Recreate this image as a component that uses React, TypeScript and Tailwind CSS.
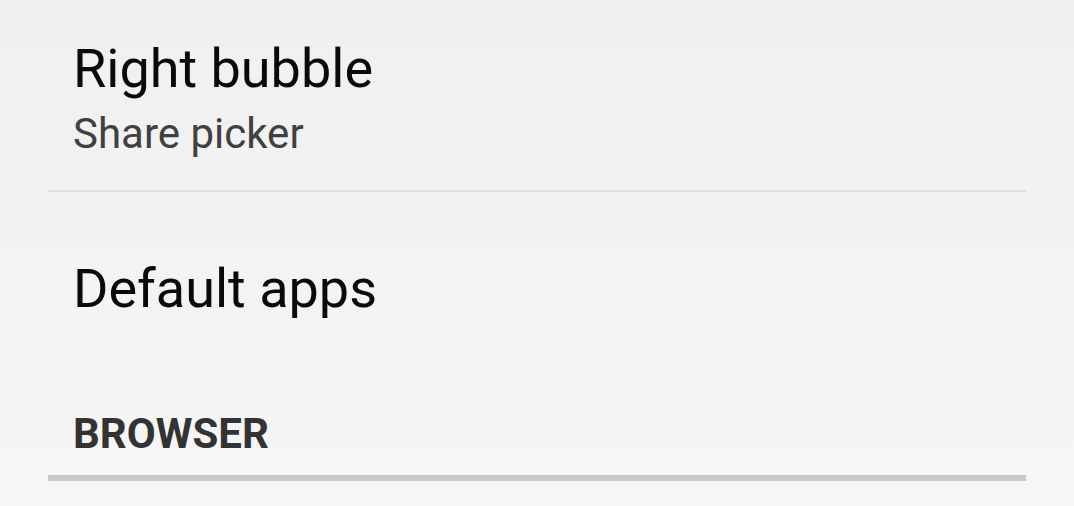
import React from 'react';

const font = { fontFamily: 'Roboto, "Noto Sans", sans-serif' };

export default function App() {
  return (
    <div
      className="w-[1074px] h-[506px] overflow-hidden bg-gradient-to-b from-[#f0f0f0] to-[#f6f6f6] px-[48px]"
      style={font}
    >
      {/* Right bubble */}
      <div className="pt-[37px] pb-[31px] pl-[25px] border-b-2 border-[#e0e0e0] w-[978px]">
        <div className="text-[54px] leading-[64px] text-[#0a0a0a]">Right bubble</div>
        <div className="text-[42px] leading-[50px] text-[#404040] mt-[8px]">Share picker</div>
      </div>

      {/* Default apps */}
      <div className="pt-[65px] pl-[25px] w-[978px]">
        <div className="text-[54px] leading-[64px] text-[#0a0a0a]">Default apps</div>
      </div>

      {/* Section header */}
      <div className="mt-[88px] w-[978px] border-b-[6px] border-[#c8c8c8]">
        <div className="pl-[25px] pb-[16px] text-[42px] leading-[50px] font-bold text-[#333]">BROWSER</div>
      </div>
    </div>
  );
}
